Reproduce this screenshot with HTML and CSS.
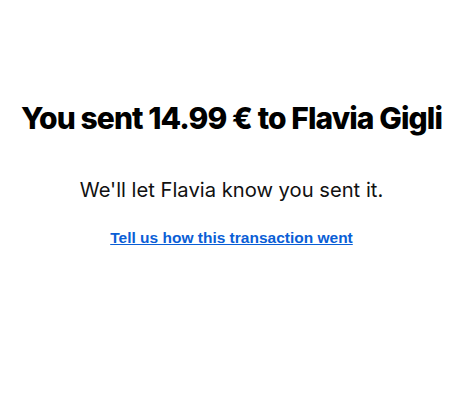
FILE: index.html
```html
<!DOCTYPE html>
<html>
<head>
<meta charset="utf-8">
<link rel="stylesheet" href="styles.css">
</head>
<body>
<main class="page">
  <h1 class="title">You sent 14.99 € to Flavia Gigli</h1>
  <p class="message">We'll let Flavia know you sent it.</p>
  <a class="feedback" href="#">Tell us how this transaction went</a>
</main>
</body>
</html>
```
FILE: styles.css
```css
html, body {
  margin: 0;
  padding: 0;
  background: #ffffff;
}
.page {
  display: flex;
  flex-direction: column;
  align-items: center;
  padding: 98px 9px 0 0;
  text-align: center;
}
.title {
  margin: 0;
  font-family: "Inter", sans-serif;
  font-weight: 800;
  font-size: 30px;
  line-height: 40px;
  letter-spacing: -0.9px;
  color: #000000;
}
.message {
  margin: 39px 0 0;
  font-family: "Inter", sans-serif;
  font-weight: 400;
  font-size: 20.2px;
  line-height: 26px;
  color: #111111;
}
.feedback {
  margin-top: 25px;
  font-family: "Liberation Sans", Arial, sans-serif;
  font-weight: 700;
  font-size: 15.5px;
  line-height: 20px;
  color: #0a5ed6;
  text-decoration: underline;
}
```
